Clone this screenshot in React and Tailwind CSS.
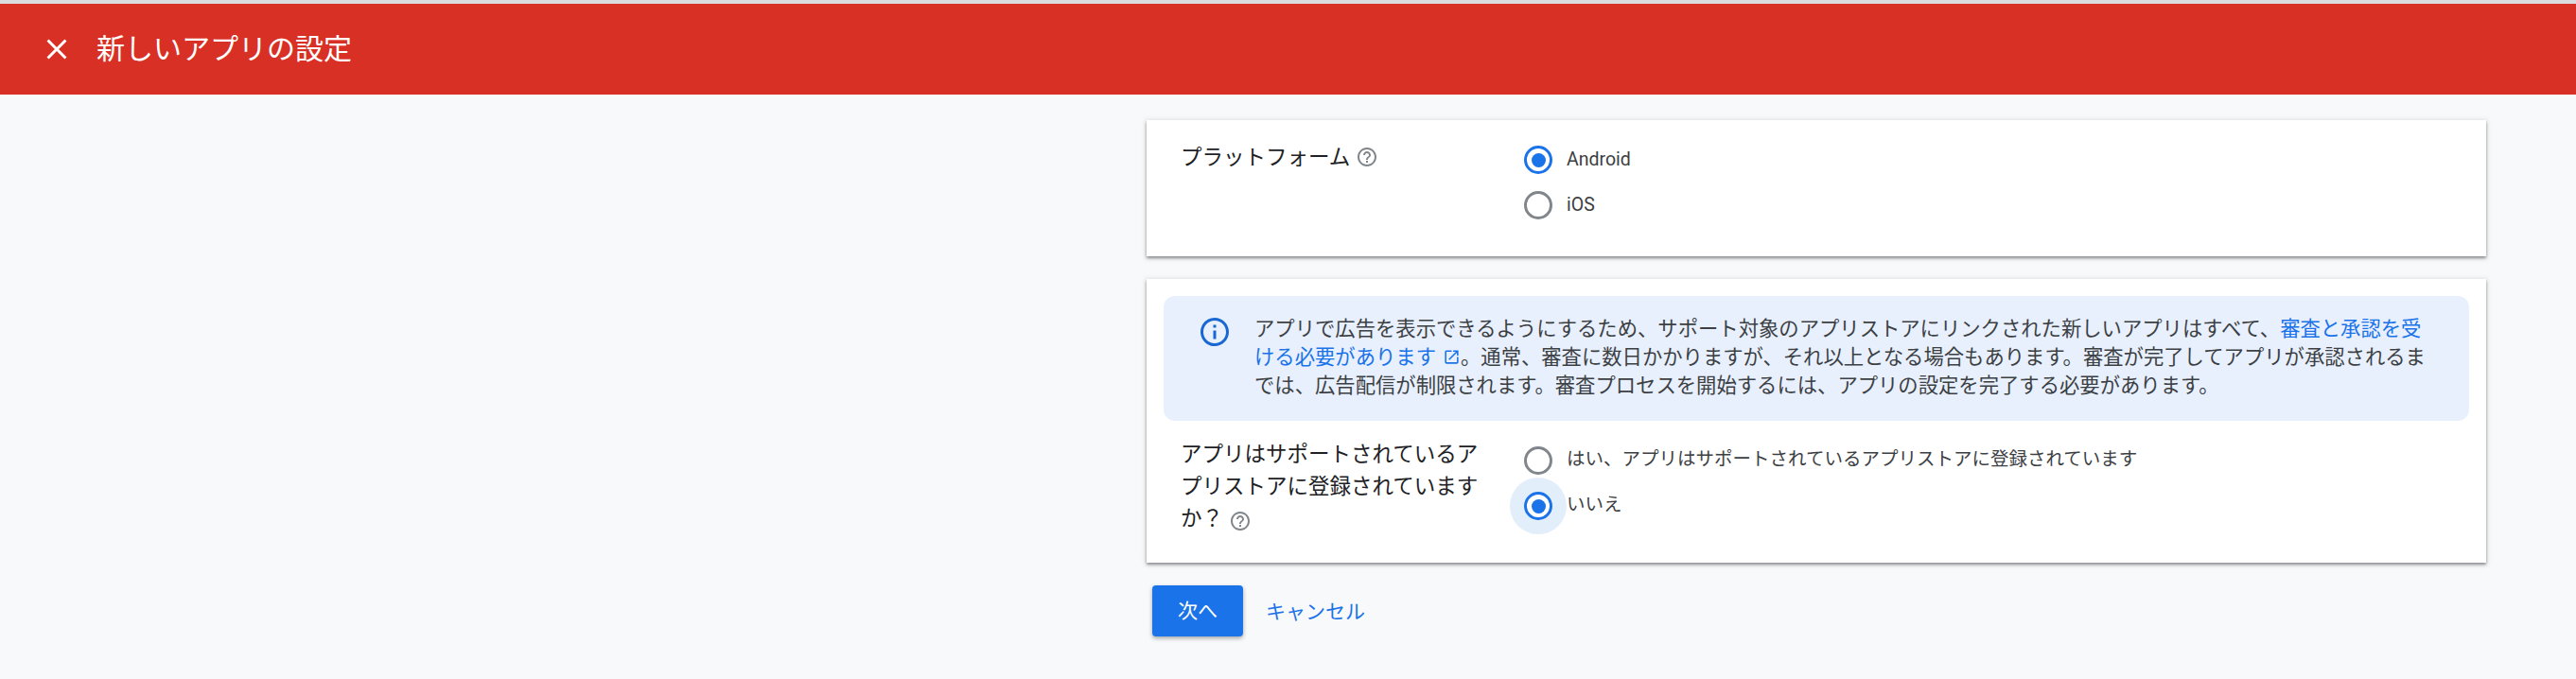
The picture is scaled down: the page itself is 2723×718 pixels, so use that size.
import React from 'react'

const FONT = "font-['Roboto','Noto_Sans_CJK_JP',sans-serif]"

function HelpIcon({ className }) {
    return (
        <svg viewBox="0 0 24 24" className={className} fill="#80868b">
            <path d="M11 18h2v-2h-2v2zm1-16C6.48 2 2 6.48 2 12s4.48 10 10 10 10-4.48 10-10S17.52 2 12 2zm0 18c-4.41 0-8-3.59-8-8s3.59-8 8-8 8 3.59 8 8-3.59 8-8 8zm0-14c-2.21 0-4 1.79-4 4h2c0-1.1.9-2 2-2s2 .9 2 2c0 2-3 1.75-3 5h2c0-2.25 3-2.5 3-5 0-2.21-1.79-4-4-4z" />
        </svg>
    )
}

function Radio({ checked, halo, labelClass, children }) {
    return (
        <div className="flex items-center h-[48px]">
            <div className="relative flex items-center justify-center w-[30px] h-[30px]">
                {halo && <div className="absolute -inset-[15px] rounded-full bg-[#e3eefb]" />}
                <div
                    className={
                        checked
                            ? 'relative flex items-center justify-center w-[30px] h-[30px] rounded-full border-[3px] border-[#1a73e8] bg-white'
                            : 'relative w-[30px] h-[30px] rounded-full border-[3px] border-[#80868b] bg-white'
                    }
                >
                    {checked && <div className="w-[15px] h-[15px] rounded-full bg-[#1a73e8]" />}
                </div>
            </div>
            <span className={`ml-[15px] text-[19.5px] leading-[24px] text-[#3c4043] ${labelClass || ''}`}>{children}</span>
        </div>
    )
}

export default function App() {
    return (
        <div className={`${FONT} h-[718px] overflow-hidden bg-[#f8f9fa]`}>
            <div className="h-1 bg-[#dadce0]" />
            <header className="flex items-center h-24 pl-[42px] bg-[#d93025] text-white">
                <svg viewBox="0 0 24 24" className="w-9 h-9" fill="#ffffff">
                    <path d="M19 6.41L17.59 5 12 10.59 6.41 5 5 6.41 10.59 12 5 17.59 6.41 19 12 13.41 17.59 19 19 17.59 13.41 12z" />
                </svg>
                <h1 className="ml-6 text-[30px] leading-none font-normal">新しいアプリの設定</h1>
            </header>

            <main className="ml-[1212px] w-[1416px] pt-[27px]">
                <section className="flex h-[144px] pl-[36px] pt-[18px] bg-white shadow-[0_2px_3px_rgba(60,64,67,0.55),0_1px_6px_1px_rgba(60,64,67,0.12)]">
                    <div className="flex items-start w-[363px] pt-[4px] text-[22.5px] leading-[34px] text-[#202124]">
                        プラットフォーム
                        <HelpIcon className="ml-[6px] mt-[5px] w-[24px] h-[24px]" />
                    </div>
                    <div className="flex flex-col">
                        <Radio checked>Android</Radio>
                        <Radio>iOS</Radio>
                    </div>
                </section>

                <section className="h-[300px] mt-6 pt-[18px] px-[18px] bg-white shadow-[0_2px_3px_rgba(60,64,67,0.55),0_1px_6px_1px_rgba(60,64,67,0.12)]">
                    <div className="flex h-[132px] pl-[36px] pr-[36px] pt-[20px] rounded-xl bg-[#e8f0fe]">
                        <svg viewBox="0 0 24 24" className="shrink-0 w-9 h-9" fill="#1967d2">
                            <path d="M11 7h2v2h-2zm0 4h2v6h-2zm1-9C6.48 2 2 6.48 2 12s4.48 10 10 10 10-4.48 10-10S17.52 2 12 2zm0 18c-4.41 0-8-3.59-8-8s3.59-8 8-8 8 3.59 8 8-3.59 8-8 8z" />
                        </svg>
                        <p className="ml-[24px] text-[21.33px] leading-[30px] text-[#3c4043]">
                            アプリで広告を表示できるようにするため、サポート対象のアプリストアにリンクされた新しいアプリはすべて、
                            <a className="text-[#1a73e8]">
                                審査と承認を受ける必要があります
                                <svg viewBox="0 0 24 24" className="inline-block ml-[7px] -mt-[3px] w-[19px] h-[19px]" fill="#1a73e8">
                                    <path d="M19 19H5V5h7V3H5a2 2 0 0 0-2 2v14c0 1.1.9 2 2 2h14c1.1 0 2-.9 2-2v-7h-2v7zM14 3v2h3.59l-9.83 9.83 1.41 1.41L19 6.41V10h2V3h-7z" />
                                </svg>
                            </a>
                            。通常、審査に数日かかりますが、それ以上となる場合もあります。審査が完了してアプリが承認されるまでは、広告配信が制限されます。審査プロセスを開始するには、アプリの設定を完了する必要があります。
                        </p>
                    </div>
                    <div className="flex mt-[18px] pl-[18px]">
                        <div className="w-[363px] pr-[30px] text-[22.5px] leading-[34px] text-[#202124]">
                            アプリはサポートされているアプリストアに登録されていますか？
                            <HelpIcon className="inline-block ml-[6px] mt-[1px] w-[24px] h-[24px]" />
                        </div>
                        <div className="flex flex-col">
                            <Radio labelClass="-mt-[3px]">はい、アプリはサポートされているアプリストアに登録されています</Radio>
                            <Radio checked halo labelClass="-mt-[3px]">いいえ</Radio>
                        </div>
                    </div>
                </section>

                <div className="flex items-center mt-6 ml-[6px]">
                    <button className="w-24 h-[54px] pt-[2px] rounded bg-[#1a73e8] text-[21px] text-white shadow-[0_2px_4px_rgba(60,64,67,0.45)]">
                        次へ
                    </button>
                    <a className="ml-6 pt-[3px] text-[21px] text-[#1a73e8]">キャンセル</a>
                </div>
            </main>
        </div>
    )
}
